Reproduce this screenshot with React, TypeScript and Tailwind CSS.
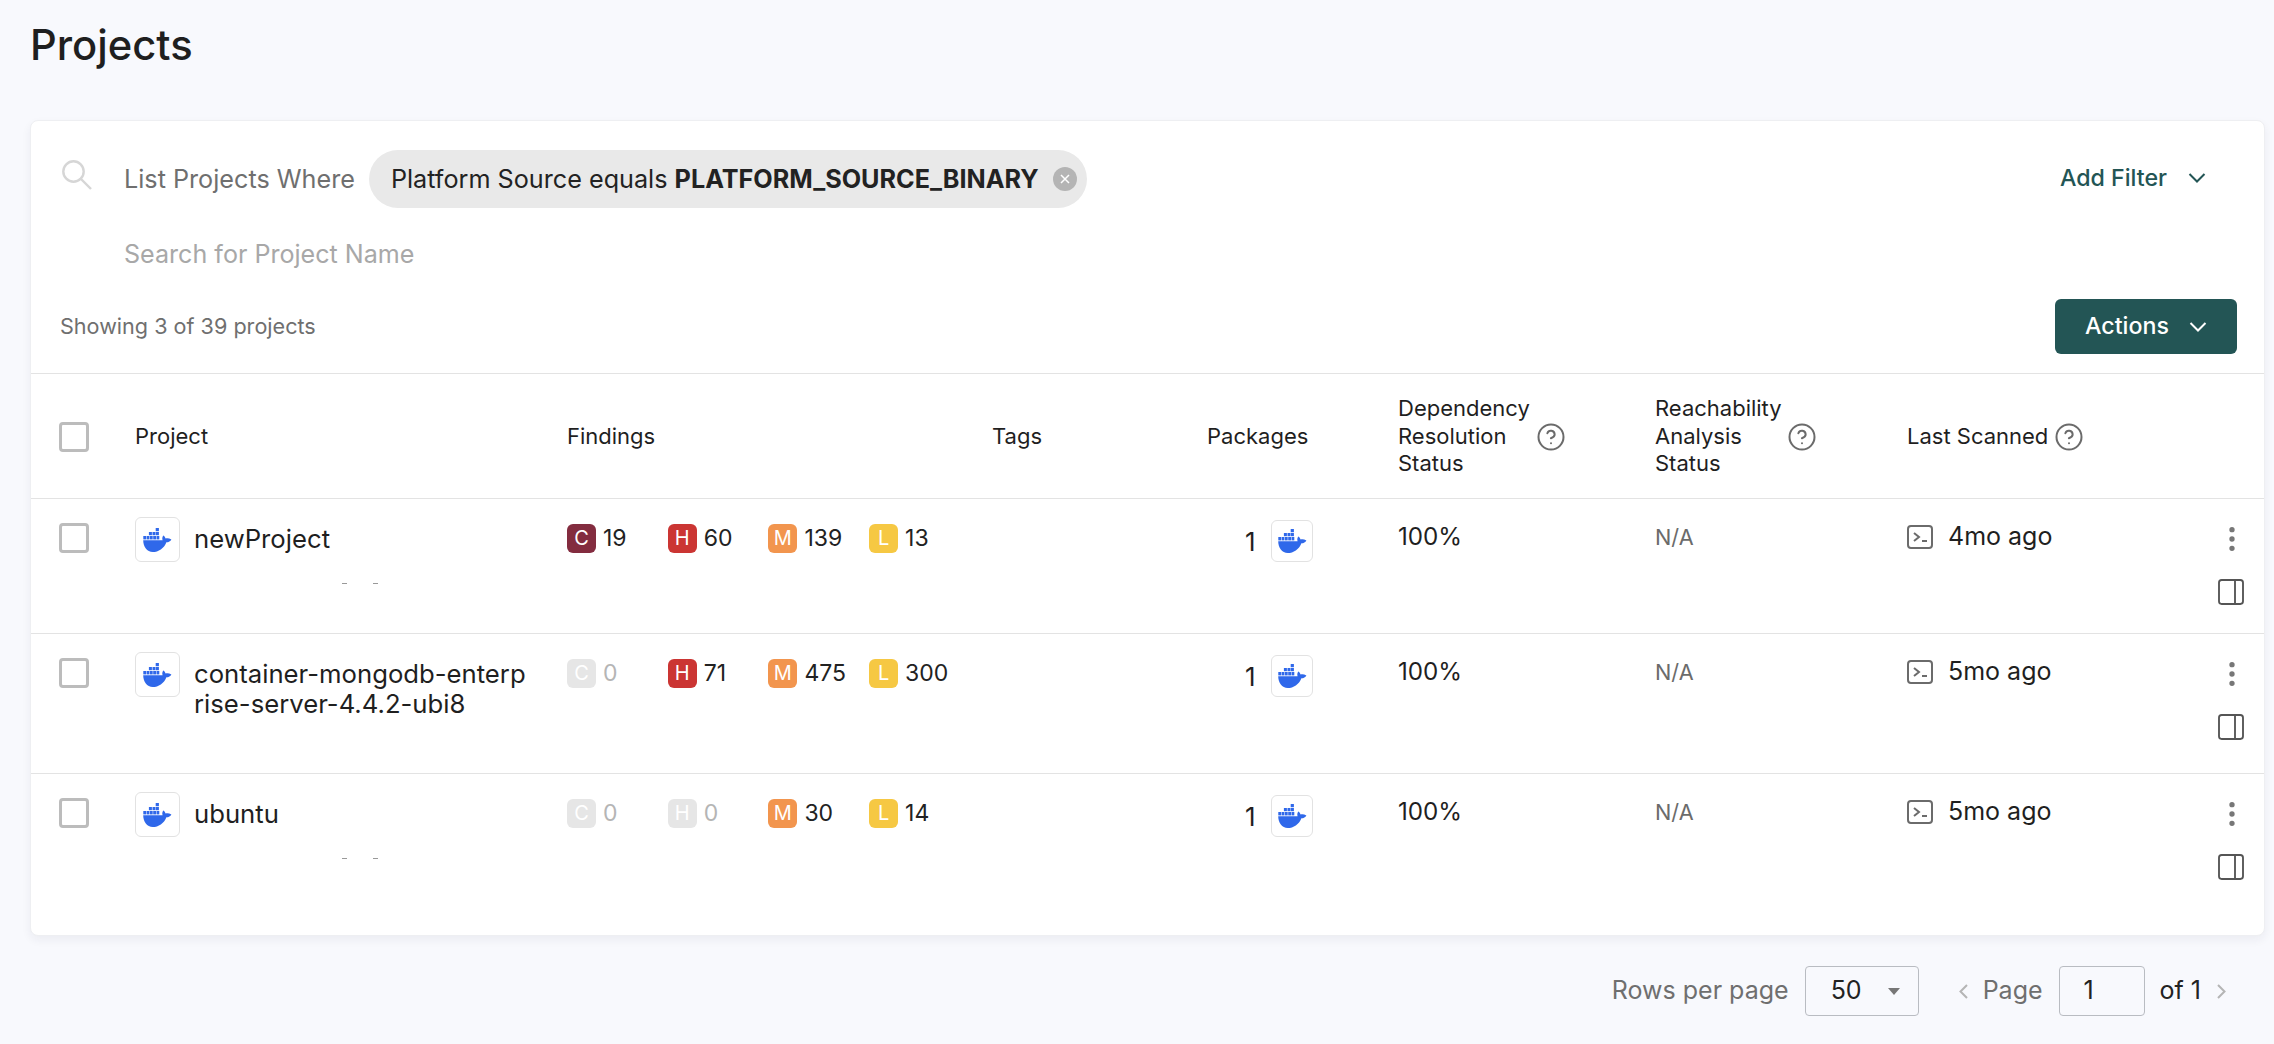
import { CircleHelp, EllipsisVertical, PanelRight } from "lucide-react";

type Severity = { label: string; count: number; badge: string };

const critical = "bg-[#832c3f]";
const high = "bg-[#cb3533]";
const medium = "bg-[#f2954e]";
const low = "bg-[#f6c843]";

const rows = [
  {
    name: "newProject",
    scanned: "4mo ago",
    rowClass: "h-[135px] pt-[18px] border-b",
    hint: true,
    findings: [
      { label: "C", count: 19, badge: critical },
      { label: "H", count: 60, badge: high },
      { label: "M", count: 139, badge: medium },
      { label: "L", count: 13, badge: low },
    ],
  },
  {
    name: "container-mongodb-enterprise-server-4.4.2-ubi8",
    scanned: "5mo ago",
    rowClass: "h-[140px] pt-[18px] border-b",
    hint: false,
    findings: [
      { label: "C", count: 0, badge: critical },
      { label: "H", count: 71, badge: high },
      { label: "M", count: 475, badge: medium },
      { label: "L", count: 300, badge: low },
    ],
  },
  {
    name: "ubuntu",
    scanned: "5mo ago",
    rowClass: "h-[161px] pt-[18px]",
    hint: true,
    findings: [
      { label: "C", count: 0, badge: critical },
      { label: "H", count: 0, badge: high },
      { label: "M", count: 30, badge: medium },
      { label: "L", count: 14, badge: low },
    ],
  },
];

const gridCols = "grid grid-cols-[76px_432px_425px_215px_191px_257px_252px_1fr] pl-[28px]";

function Chevron() {
  return (
    <svg viewBox="0 0 18 10" fill="none" stroke="currentColor" strokeWidth="2" className="w-[18px] h-[10px]">
      <path d="M1.5 1 9 8.5 16.5 1" />
    </svg>
  );
}

function DockerLogo({ className }: { className: string }) {
  return (
    <svg viewBox="0 0 29 24" fill="#2f68ea" className={className}>
      <path d="M.2 12.2h19.4c-.6-1.6-.3-3.2.6-4.7 1.2.7 2.1 1.8 2.4 3.1 1.7-.5 3.4-.3 5.8.8-1 1.9-2.7 2.8-5 2.8C21 20.4 15.5 24 9.8 24 4 24 .2 18.5.2 12.2Z" />
      <rect x="12.7" y="0" width="3.2" height="3.2" />
      <rect x="5.9" y="4" width="3" height="3.2" />
      <rect x="9.5" y="4" width="3" height="3.2" />
      <rect x="12.9" y="4" width="3" height="3.2" />
      <rect x="0.3" y="8" width="2.8" height="3.4" />
      <rect x="3.6" y="8" width="2.8" height="3.4" />
      <rect x="6.9" y="8" width="2.8" height="3.4" />
      <rect x="10.2" y="8" width="2.8" height="3.4" />
      <rect x="13.5" y="8" width="2.8" height="3.4" />
    </svg>
  );
}

function TerminalIcon() {
  return (
    <svg viewBox="0 0 26 24" fill="none" stroke="#6b6b6b" strokeWidth="2" className="w-[26px] h-[24px] shrink-0">
      <rect x="1" y="1" width="24" height="22" rx="3" />
      <path d="m7 8 5 4-5 4M15 16h5" />
    </svg>
  );
}

function SearchIcon() {
  return (
    <svg viewBox="0 0 30 30" fill="none" stroke="#d6d6d6" strokeWidth="2.4" className="w-[30px] h-[30px] -mt-[8px] shrink-0">
      <circle cx="11.5" cy="11.5" r="10.2" />
      <path d="m19 19 10 10" />
    </svg>
  );
}

function Checkbox() {
  return <div className="w-[30px] h-[30px] rounded-[4px] border-[3px] border-[#bcbcbc] bg-white" />;
}

function Help() {
  return <CircleHelp size={30} strokeWidth={1.6} className="text-[#6b6b6b] shrink-0" />;
}

function Finding({ item }: { item: Severity }) {
  const empty = item.count === 0;
  return (
    <div className="flex items-center gap-[7px] w-[100.7px]">
      <span className={"w-[29px] h-[29px] rounded-[6px] flex items-center justify-center text-[20px] text-white " + (empty ? "bg-[#e6e6e6]" : item.badge)}>
        {item.label}
      </span>
      <span className={"text-[23px] " + (empty ? "text-[#b5b5b5]" : "text-[#222222]")}>{item.count}</span>
    </div>
  );
}

export default function App() {
  return (
    <div className="min-h-screen bg-[#f8f9fd] pl-[30px] pr-[9px] pt-[23px] font-[family-name:Inter,sans-serif] text-[#1f1f1f] overflow-hidden">
      <h1 className="h-[44px] text-[41.7px] leading-[44px] font-medium">Projects</h1>

      <div className="mt-[53px] bg-white border border-[#eeeff2] rounded-[8px] shadow-[0_4px_10px_rgba(30,40,70,0.06)]">
        <div className="pt-[29px] flex items-center pl-[31px] pr-[58px]">
          <SearchIcon />
          <span className="ml-[32px] pt-[1px] text-[25.2px] text-[#6f6f6f]">List Projects Where</span>
          <div className="ml-[14px] h-[58px] rounded-full bg-[#e9e9e9] flex items-center pl-[22px] pr-[10px]">
            <span className="pt-[1px] text-[25.2px] text-[#222222]">
              Platform Source equals <b className="font-bold">PLATFORM_SOURCE_BINARY</b>
            </span>
            <span className="ml-[14px] w-[24px] h-[24px] rounded-full bg-[#b4b4b4] flex items-center justify-center">
              <svg viewBox="0 0 10 10" fill="none" stroke="white" strokeWidth="1.5" className="w-[10px] h-[10px]">
                <path d="m1 1 8 8M9 1 1 9" />
              </svg>
            </span>
          </div>
          <div className="ml-auto -mt-[2px] flex items-center gap-[21px] text-[#235555]">
            <span className="text-[23.2px] font-medium">Add Filter</span>
            <Chevron />
          </div>
        </div>

        <div className="mt-[29px] h-[36px] pl-[93px] flex items-center text-[25.1px] text-[#a8a8a8]">Search for Project Name</div>

        <div className="mt-[26px] mb-[19px] pl-[29px] pr-[27px] flex items-center justify-between">
          <span className="text-[21.6px] text-[#6f6f6f]">Showing 3 of 39 projects</span>
          <button className="w-[182px] h-[55px] rounded-[6px] bg-[#235555] text-white flex items-center justify-center gap-[20px] text-[23.2px] font-medium">
            Actions
            <Chevron />
          </button>
        </div>

        <div className={gridCols + " h-[126px] pt-[1px] border-y border-[#e3e3e3] items-center text-[22px] leading-[27.5px]"}>
          <Checkbox />
          <span>Project</span>
          <span>Findings</span>
          <span>Tags</span>
          <span>Packages</span>
          <div className="flex items-center gap-[7px]">
            <span className="w-[131px]">Dependency Resolution Status</span>
            <Help />
          </div>
          <div className="flex items-center gap-[7px]">
            <span className="w-[125px]">Reachability Analysis Status</span>
            <Help />
          </div>
          <div className="flex items-center gap-[6px]">
            <span>Last Scanned</span>
            <Help />
          </div>
        </div>

        {rows.map((row) => (
          <div key={row.name} className={gridCols + " border-[#e3e3e3] items-start " + row.rowClass}>
            <div className="pt-[6px]">
              <Checkbox />
            </div>
            <div className="flex gap-[14px]">
              <div className="w-[45px] h-[45px] shrink-0 rounded-[6px] border border-[#e2e2e2] flex items-center justify-center">
                <DockerLogo className="w-[29px] h-[24px]" />
              </div>
              <div className="w-[335px]">
                <div className="pt-[7px] text-[25.7px] leading-[30px] break-all">{row.name}</div>
                {row.hint && (
                  <div className="mt-[29px] ml-[148px] flex gap-[26px]">
                    <span className="w-[5px] h-[1px] bg-[#999999]" />
                    <span className="w-[5px] h-[1px] bg-[#999999]" />
                  </div>
                )}
              </div>
            </div>
            <div className="flex pt-[4px]">
              {row.findings.map((item) => (
                <Finding key={item.label} item={item} />
              ))}
            </div>
            <div />
            <div className="flex items-center pl-[38px] gap-[16px] pt-[3px]">
              <span className="text-[26px] w-[10px]">1</span>
              <div className="w-[42px] h-[42px] rounded-[6px] border border-[#e2e2e2] flex items-center justify-center">
                <DockerLogo className="w-[29px] h-[24px]" />
              </div>
            </div>
            <span className="text-[24.2px] leading-[28px] pt-[6px]">100%</span>
            <span className="text-[21.7px] leading-[28px] pt-[6px] text-[#6b6b6b]">N/A</span>
            <div className="flex justify-between pr-[16px]">
              <div className="flex items-center gap-[15px] pt-[8px] h-[32px]">
                <TerminalIcon />
                <span className="text-[25px]">{row.scanned}</span>
              </div>
              <div className="flex flex-col items-center">
                <EllipsisVertical size={32} strokeWidth={2} className="text-[#777777] ml-[3px] mt-[6px]" />
                <PanelRight size={32} strokeWidth={1.4} className="text-[#555555] mt-[21px]" />
              </div>
            </div>
          </div>
        ))}
      </div>

      <div className="mt-[30px] pr-[39px] flex items-center justify-end text-[25px] text-[#6f6f6f]">
        <span>Rows per page</span>
        <div className="ml-[16px] w-[114px] h-[50px] rounded-[4px] border border-[#b9bcc2] flex items-center pl-[25px] text-[#222222]">
          50
          <svg viewBox="0 0 12 7" fill="#777777" className="ml-[26px] w-[12px] h-[7px]">
            <path d="M0 0h12L6 7Z" />
          </svg>
        </div>
        <svg viewBox="0 0 9 15" fill="none" stroke="#b5b5b5" strokeWidth="2" className="ml-[40px] w-[9px] h-[15px]">
          <path d="M8 1 1.5 7.5 8 14" />
        </svg>
        <span className="ml-[15px]">Page</span>
        <div className="ml-[16px] w-[86px] h-[50px] rounded-[4px] border border-[#b9bcc2] flex items-center pl-[24px] text-[#222222]">1</div>
        <span className="ml-[15px] text-[#222222]">of 1</span>
        <svg viewBox="0 0 9 15" fill="none" stroke="#b5b5b5" strokeWidth="2" className="ml-[16px] w-[9px] h-[15px]">
          <path d="M1 1l6.5 6.5L1 14" />
        </svg>
      </div>
    </div>
  );
}
